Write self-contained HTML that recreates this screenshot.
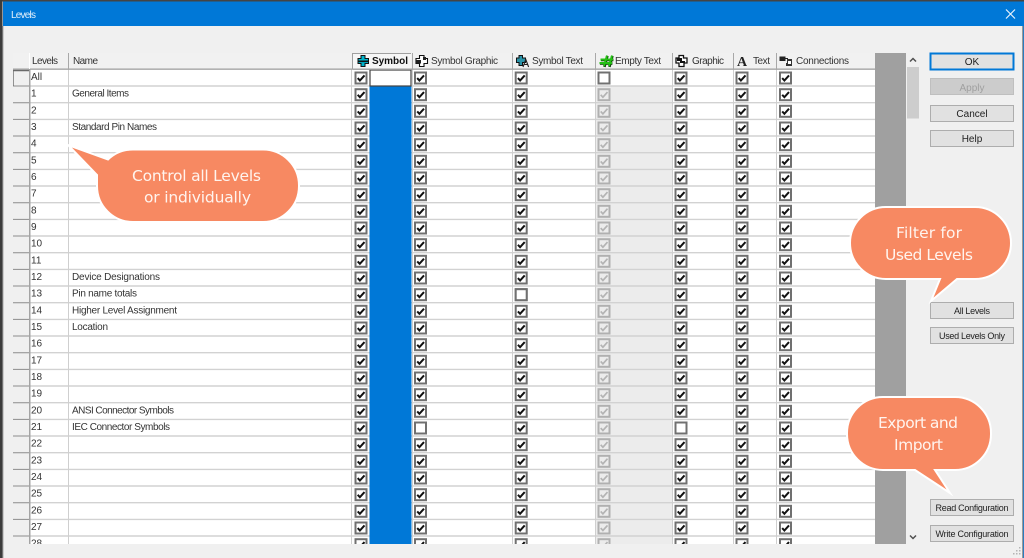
<!DOCTYPE html>
<html><head><meta charset="utf-8"><title>Levels</title>
<style>
html,body{margin:0;padding:0;width:1024px;height:558px;overflow:hidden;background:#f0f0f0}
svg{display:block}
text{font-family:"Liberation Sans",sans-serif;font-size:10px;fill:#333}
.c{font-family:"DejaVu Sans","Liberation Sans",sans-serif;font-size:15.5px;fill:#fff4ee}
.b{text-anchor:middle;fill:#222}
.s{font-size:9px}
</style></head><body>
<svg width="1024" height="558" viewBox="0 0 1024 558" xmlns="http://www.w3.org/2000/svg">
<defs>
<g id="on"><rect x="1" y="1" width="11" height="11" fill="#fff" stroke="#707070" stroke-width="2"/><path d="M3.2 6.6L5.4 9L10 3.900" fill="none" stroke="#111" stroke-width="2"/></g>
<g id="off"><rect x="1" y="1" width="11" height="11" fill="#fff" stroke="#707070" stroke-width="2"/></g>
<g id="dis"><rect x="1" y="1" width="11" height="11" fill="#ececec" stroke="#b0b0b0" stroke-width="2"/><path d="M3.2 6.6L5.4 9L10 3.900" fill="none" stroke="#b4b4b4" stroke-width="1.700"/></g>
<g id="col">
<use href="#on" y="71.5"/><use href="#on" y="88.2"/><use href="#on" y="104.8"/><use href="#on" y="121.5"/><use href="#on" y="138.2"/><use href="#on" y="154.8"/><use href="#on" y="171.5"/><use href="#on" y="188.2"/><use href="#on" y="204.8"/><use href="#on" y="221.5"/><use href="#on" y="238.2"/><use href="#on" y="254.8"/><use href="#on" y="271.5"/><use href="#on" y="288.2"/><use href="#on" y="304.8"/><use href="#on" y="321.5"/><use href="#on" y="338.2"/><use href="#on" y="354.8"/><use href="#on" y="371.5"/><use href="#on" y="388.2"/><use href="#on" y="404.8"/><use href="#on" y="421.5"/><use href="#on" y="438.2"/><use href="#on" y="454.8"/><use href="#on" y="471.5"/><use href="#on" y="488.2"/><use href="#on" y="504.8"/><use href="#on" y="521.5"/><use href="#on" y="538.2"/>
</g>
<g id="dcol">
<use href="#off" y="71.5"/><use href="#dis" y="88.2"/><use href="#dis" y="104.8"/><use href="#dis" y="121.5"/><use href="#dis" y="138.2"/><use href="#dis" y="154.8"/><use href="#dis" y="171.5"/><use href="#dis" y="188.2"/><use href="#dis" y="204.8"/><use href="#dis" y="221.5"/><use href="#dis" y="238.2"/><use href="#dis" y="254.8"/><use href="#dis" y="271.5"/><use href="#dis" y="288.2"/><use href="#dis" y="304.8"/><use href="#dis" y="321.5"/><use href="#dis" y="338.2"/><use href="#dis" y="354.8"/><use href="#dis" y="371.5"/><use href="#dis" y="388.2"/><use href="#dis" y="404.8"/><use href="#dis" y="421.5"/><use href="#dis" y="438.2"/><use href="#dis" y="454.8"/><use href="#dis" y="471.5"/><use href="#dis" y="488.2"/><use href="#dis" y="504.8"/><use href="#dis" y="521.5"/><use href="#dis" y="538.2"/>
</g>
<clipPath id="tb"><rect x="13" y="53" width="893" height="491"/></clipPath>
</defs>

<!-- window frame -->
<rect width="1024" height="558" fill="#f0f0f0"/>
<rect x="0" y="0" width="1024" height="1.5" fill="#444"/>
<rect x="0" y="0" width="2.5" height="558" fill="#3c3c3c"/>
<rect x="2.5" y="26" width="1" height="532" fill="#a8a8a8"/>
<rect x="3" y="1.5" width="1021" height="24.5" fill="#0078d7"/>
<rect x="1022" y="26" width="1" height="532" fill="#9a9a9a"/>
<rect x="1023" y="26" width="1" height="532" fill="#2a7cc0"/>
<text x="11" y="18" textLength="25" style="fill:#e4f1fb">Levels</text>
<path d="M1006 9.5L1015 18.5M1015 9.5L1006 18.5" stroke="#e8f3fc" stroke-width="1.2" fill="none"/>

<g clip-path="url(#tb)">
<rect x="29" y="69" width="846" height="475" fill="#fff"/>
<rect x="13" y="69" width="16" height="475" fill="#f0f0f0"/>
<rect x="596" y="86" width="76" height="458" fill="#ececec"/>
<g stroke="#d2d2d2" stroke-width="1.4">
<path d="M29 86H875M29 102.7H875M29 119.4H875M29 136H875M29 152.7H875M29 169.4H875M29 186H875M29 202.7H875M29 219.4H875M29 236H875M29 252.7H875M29 269.4H875M29 286H875M29 302.7H875M29 319.4H875M29 336H875M29 352.7H875M29 369.4H875M29 386H875M29 402.7H875M29 419.4H875M29 436H875M29 452.7H875M29 469.4H875M29 486H875M29 502.7H875M29 519.4H875M29 536H875"/>
</g>
<g stroke="#8c8c8c" stroke-width="1">
<path d="M13 86H29M13 102.7H29M13 119.4H29M13 136H29M13 152.7H29M13 169.4H29M13 186H29M13 202.7H29M13 219.4H29M13 236H29M13 252.7H29M13 269.4H29M13 286H29M13 302.7H29M13 319.4H29M13 336H29M13 352.7H29M13 369.4H29M13 386H29M13 402.7H29M13 419.4H29M13 436H29M13 452.7H29M13 469.4H29M13 486H29M13 502.7H29M13 519.4H29M13 536H29"/>
</g>
<path d="M13 86V70.5H29" fill="none" stroke="#6a6a6a" stroke-width="1.4"/>
<g stroke="#cfcfcf" stroke-width="1"><path d="M68.5 69V544M351.5 69V544M412.5 69V544M512.5 69V544M595.5 69V544M672.5 69V544M733.5 69V544M776.5 69V544"/></g>
<rect x="29" y="69" width="1.5" height="475" fill="#a4a4a4"/>
<rect x="369.5" y="86" width="42" height="458" fill="#0078d7"/>
<rect x="370" y="70" width="41" height="16" fill="#fff" stroke="#444" stroke-width="1.2"/>
<rect x="875" y="53" width="31" height="491" fill="#a0a0a0"/>
<rect x="13" y="53" width="862" height="16" fill="#f1f1f1"/>
<rect x="13" y="68.5" width="862" height="1.3" fill="#a0a0a0"/>
<g stroke="#a8a8a8" stroke-width="1"><path d="M29.5 53V69M68.5 53V69M412.5 53V69M512.5 53V69M595.5 53V69M672.5 53V69M733.5 53V69M776.5 53V69"/></g>
<rect x="29" y="53" width="1" height="16" fill="#fff"/>
<path d="M352.5 69V53.5H411" fill="none" stroke="#a0a0a0"/>
<rect x="353" y="54" width="58" height="15" fill="#f6f6f6"/>
<rect x="353" y="68.5" width="59" height="1.3" fill="#a0a0a0"/>

<use href="#col" x="354.5"/>
<use href="#col" x="414"/>
<use href="#col" x="514.7"/>
<use href="#dcol" x="597.5"/>
<use href="#col" x="674.5"/>
<use href="#col" x="735.5"/>
<use href="#col" x="779"/>
<use href="#off" x="414" y="421.5"/>
<use href="#off" x="514.7" y="288.2"/>
<use href="#off" x="674.5" y="421.5"/>

<g>
<text x="31" y="80">All</text><text x="31" y="96.7">1</text><text x="31" y="113.3">2</text><text x="31" y="130">3</text><text x="31" y="146.7">4</text><text x="31" y="163.3">5</text><text x="31" y="180">6</text><text x="31" y="196.7">7</text><text x="31" y="213.3">8</text><text x="31" y="230">9</text><text x="31" y="246.7">10</text><text x="31" y="263.3">11</text><text x="31" y="280">12</text><text x="31" y="296.7">13</text><text x="31" y="313.3">14</text><text x="31" y="330">15</text><text x="31" y="346.7">16</text><text x="31" y="363.3">17</text><text x="31" y="380">18</text><text x="31" y="396.7">19</text><text x="31" y="413.3">20</text><text x="31" y="430">21</text><text x="31" y="446.7">22</text><text x="31" y="463.3">23</text><text x="31" y="480">24</text><text x="31" y="496.7">25</text><text x="31" y="513.3">26</text><text x="31" y="530">27</text><text x="31" y="546.7">28</text>
</g>
<text x="72" y="96.7" textLength="57">General Items</text>
<text x="72" y="130" textLength="85">Standard Pin Names</text>
<text x="72" y="280" textLength="88">Device Designations</text>
<text x="72" y="296.7" textLength="65">Pin name totals</text>
<text x="72" y="313.3" textLength="105">Higher Level Assignment</text>
<text x="72" y="330" textLength="36">Location</text>
<text x="72" y="413.3" textLength="102">ANSI Connector Symbols</text>
<text x="72" y="430" textLength="98">IEC Connector Symbols</text>

<text x="32" y="64" textLength="26">Levels</text>
<text x="73" y="64" textLength="25">Name</text>
<text x="372" y="64" textLength="36" style="font-weight:bold;fill:#111">Symbol</text>
<text x="431" y="64" textLength="67">Symbol Graphic</text>
<text x="532" y="64" textLength="51">Symbol Text</text>
<text x="615" y="64" textLength="46">Empty Text</text>
<text x="692" y="64" textLength="32">Graphic</text>
<text x="753" y="64" textLength="17">Text</text>
<text x="796" y="64" textLength="53">Connections</text>
</g>

<!-- header icons -->
<path d="M361 55.5h4v3h3.5v5H365v3h-4v-3h-3v-5h3z" fill="#00b4cc" stroke="#111" stroke-width="1"/>
<path d="M358 60.5h10.5v1.6H358z" fill="#111"/>
<path d="M419.500 55.500h4.500v3h3.500v5H424v3h-4.500v-3H416v-5h3.500z" fill="#fff" stroke="#111" stroke-width="1.100"/>
<path d="M416 60h5v3.500h-5zM423 57h3v3h-3z" fill="#222"/>
<path d="M519 55.500h3.500v2.500h3v4.500h-3v3H519v-3h-2.500V58H519z" fill="#2a93a8" stroke="#111" stroke-width="1"/>
<path d="M523 67l2.800-7.500 2.800 7.500M524.200 64.500h3.200" fill="none" stroke="#222" stroke-width="1.100"/>
<!-- empty text # -->
<path d="M604 66.500L607 55.500M609 66.500L612 55.500M600.500 59.500H613M599.500 63H612" stroke="#0a3a06" stroke-width="2.600" fill="none" transform="translate(.4 .4)"/>
<path d="M604 66L607 55.500M609 66L612 55.500M600.500 59.500H613M599.500 63H612" stroke="#25c015" stroke-width="2" fill="none"/>
<path d="M679 55.500h4.500v2.500h3.500v5h-3v3.500h-5v-3.500h-3v-5h3z" fill="#fff" stroke="#111" stroke-width="1.300"/>
<path d="M677 58h5v3h3v2h-5v-2h-3z" fill="#111"/>
<text x="737" y="66" style="font-family:'Liberation Serif',serif;font-size:14px;font-weight:bold;fill:#222">A</text>
<path d="M779.500 56.500h6v4.500h-6z" fill="#222"/>
<path d="M787 59h5v7h-6v-3h1z" fill="#333"/>
<path d="M785 58.500h3" stroke="#222" stroke-width="1"/>
<rect x="788" y="61" width="3" height="3" fill="#fff"/>

<!-- scrollbar -->
<rect x="907" y="67" width="12" height="51.500" fill="#cdcdcd"/>
<path d="M910 61.500l3-3 3 3" fill="none" stroke="#505050" stroke-width="1.500"/>
<path d="M910 535.500l3 3 3-3" fill="none" stroke="#505050" stroke-width="1.500"/>

<!-- buttons -->
<g fill="#e1e1e1" stroke="#adadad">
<rect x="930.500" y="53.500" width="83" height="16" stroke="#0078d7" stroke-width="2"/>
<rect x="930.500" y="78.500" width="83" height="16" fill="#cccccc" stroke="#bfbfbf"/>
<rect x="930.500" y="105.500" width="83" height="16"/>
<rect x="930.500" y="130.500" width="83" height="16"/>
<rect x="930.500" y="302.500" width="83" height="16"/>
<rect x="930.500" y="327.500" width="83" height="16"/>
<rect x="930.500" y="499.500" width="83" height="16"/>
<rect x="930.500" y="525.500" width="83" height="16"/>
</g>
<text class="b" x="972" y="65">OK</text>
<text class="b" x="972" y="91" style="fill:#a0a0a0">Apply</text>
<text class="b" x="972" y="117">Cancel</text>
<text class="b" x="972" y="142">Help</text>
<text class="b s" x="972" y="314" textLength="36">All Levels</text>
<text class="b s" x="972" y="339" textLength="66">Used Levels Only</text>
<text class="b s" x="972" y="511" textLength="73">Read Configuration</text>
<text class="b s" x="972" y="537" textLength="73">Write Configuration</text>

<g fill="#b4b4b4"><rect x="1019" y="547" width="1.500" height="1.500"/><rect x="1016" y="550" width="1.500" height="1.500"/><rect x="1019" y="550" width="1.500" height="1.500"/><rect x="1013" y="553" width="1.500" height="1.500"/><rect x="1016" y="553" width="1.500" height="1.500"/><rect x="1019" y="553" width="1.500" height="1.500"/></g>

<!-- callouts -->
<g fill="#f78962" stroke="#fff" stroke-width="2" stroke-linejoin="miter" stroke-miterlimit="12">
<path d="M133 149.500H263A36 36 0 0 1 299 185.500V186A36 36 0 0 1 263 222H133A36 36 0 0 1 97 186V175L68 145L108 159.500A36 36 0 0 1 133 149.500Z"/>
<path d="M886 207H975A36 36 0 0 1 1011 243A36 36 0 0 1 975 279H957L931 301L940 279H886A36 36 0 0 1 850 243A36 36 0 0 1 886 207Z"/>
<path d="M883 397H955A36 36 0 0 1 991 433V434A36 36 0 0 1 955 470H935L950 493L915 470H883A36 36 0 0 1 847 434V433A36 36 0 0 1 883 397Z"/>
</g>
<text class="c" x="132" y="181" textLength="129">Control all Levels</text>
<text class="c" x="144" y="202.500" textLength="107">or individually</text>
<text class="c" x="896" y="238" textLength="66">Filter for</text>
<text class="c" x="885" y="260" textLength="88">Used Levels</text>
<text class="c" x="878" y="428" textLength="80">Export and</text>
<text class="c" x="894" y="450" textLength="49">Import</text>
</svg>
</body></html>
